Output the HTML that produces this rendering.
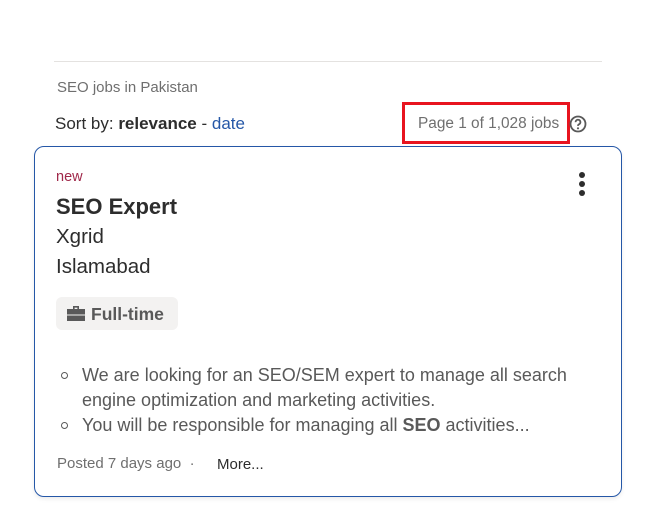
<!DOCTYPE html>
<html><head><meta charset="utf-8"><style>
*{margin:0;padding:0;box-sizing:border-box}
body{width:669px;height:521px;background:#fff;font-family:"Liberation Sans",sans-serif;position:relative;overflow:hidden;color:#2d2d2d}
.a{position:absolute;white-space:nowrap}
</style></head><body>
<div class="a" style="left:54px;top:61px;width:548px;height:1px;background:#e4e2e0"></div>
<div class="a" style="left:57px;top:79px;font-size:15px;color:#6f6f6f">SEO jobs in Pakistan</div>
<div class="a" style="left:55px;top:114px;font-size:17px;color:#2d2d2d">Sort by: <b>relevance</b> - <span style="color:#2557a7">date</span></div>
<div class="a" style="left:402px;top:102px;width:168px;height:42px;border:3px solid #e8141f"></div>
<div class="a" style="left:418px;top:115px;font-size:15.4px;color:#6f6f6f">Page 1 of 1,028 jobs</div>
<svg class="a" style="left:569px;top:115px" width="18" height="18" viewBox="0 0 18 18"><circle cx="9" cy="9" r="7.5" fill="none" stroke="#595959" stroke-width="1.8"/><path d="M6.6 7.2a2.4 2.4 0 1 1 3.4 2.1c-.8.4-1 .8-1 1.6" fill="none" stroke="#595959" stroke-width="1.8"/><circle cx="9" cy="13.3" r="1.1" fill="#595959"/></svg>
<div class="a" style="left:34px;top:146px;width:588px;height:351px;border:1px solid #2557a7;border-radius:10px;box-shadow:0 2px 4px rgba(0,0,0,.08)"></div>
<div class="a" style="left:56px;top:169px;font-size:14.5px;color:#a0284a">new</div>
<div class="a" style="left:579px;top:172px;width:6px;height:6px;border-radius:50%;background:#2d2d2d"></div>
<div class="a" style="left:579px;top:181px;width:6px;height:6px;border-radius:50%;background:#2d2d2d"></div>
<div class="a" style="left:579px;top:190px;width:6px;height:6px;border-radius:50%;background:#2d2d2d"></div>
<div class="a" style="left:56px;top:194px;font-size:22px;font-weight:bold;color:#2d2d2d">SEO Expert</div>
<div class="a" style="left:56px;top:225px;font-size:20.5px;color:#2d2d2d">Xgrid</div>
<div class="a" style="left:56px;top:255px;font-size:20.5px;color:#2d2d2d">Islamabad</div>
<div class="a" style="left:56px;top:297px;width:122px;height:33px;background:#f3f2f1;border-radius:6px"></div>
<svg class="a" style="left:66px;top:305px" width="20" height="17" viewBox="0 0 20 17"><path d="M7 1h6v3h-1.6V2.6H8.6V4H7z" fill="#595959"/><rect x="1" y="4" width="18" height="5.5" fill="#595959"/><rect x="1" y="10.5" width="18" height="5.5" fill="#595959"/></svg>
<div class="a" style="left:91px;top:304px;font-size:17.5px;font-weight:bold;color:#595959">Full-time</div>
<div class="a" style="left:61px;top:372px;width:7px;height:7px;border:1.3px solid #595959;border-radius:50%"></div>
<div class="a" style="left:82px;top:363px;font-size:18px;color:#595959;line-height:25px">We are looking for an SEO/SEM expert to manage all search<br>engine optimization and marketing activities.</div>
<div class="a" style="left:61px;top:422px;width:7px;height:7px;border:1.3px solid #595959;border-radius:50%"></div>
<div class="a" style="left:82px;top:413px;font-size:18px;color:#595959;line-height:25px">You will be responsible for managing all <b>SEO</b> activities...</div>
<div class="a" style="left:57px;top:455px;font-size:15px;color:#6f6f6f">Posted 7 days ago &nbsp;·</div>
<div class="a" style="left:217px;top:456px;font-size:15px;color:#2d2d2d">More...</div>
</body></html>
